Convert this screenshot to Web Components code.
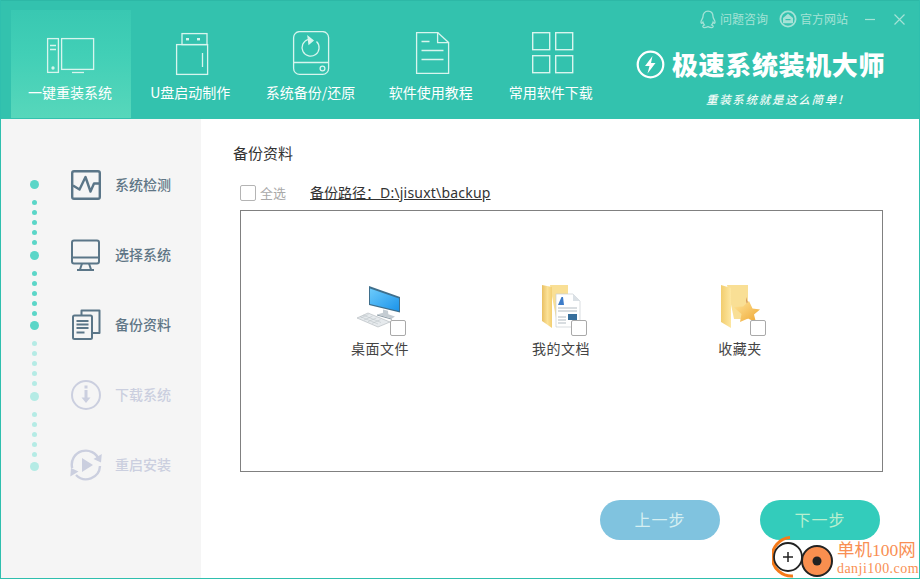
<!DOCTYPE html>
<html lang="zh"><head><meta charset="utf-8"><title>极速系统装机大师</title>
<style>
html,body{margin:0;padding:0;background:#fff;overflow:hidden}
body{font-family:"Noto Sans CJK SC","Noto Sans",sans-serif;width:920px;height:579px}
</style></head><body>
<app-window>
  <top-header slot="header">
    <nav-tab active label="一键重装系统"><svg viewBox="0 0 60 50" width="60" height="50" fill="none" stroke="#d8f5ee" stroke-width="1.3"><rect x="6.600" y="7.600" width="10.800" height="33.800"/><path d="M9 14.500h6M9 18.500h6"/><circle cx="12" cy="37" r="1" fill="#d8f5ee"/><rect x="20.600" y="7.600" width="32" height="30.800"/><path d="M31 41.500h12"/></svg></nav-tab>
    <nav-tab label="U盘启动制作"><svg viewBox="0 0 60 50" width="60" height="50" fill="none" stroke="#d8f5ee" stroke-width="1.3"><rect x="21" y="2.600" width="25" height="11"/><rect x="15.600" y="13.600" width="31" height="29.800"/><path d="M41.500 22v14"/><rect x="25" y="7" width="3" height="2.400" fill="#d8f5ee" stroke="none"/><rect x="36" y="7" width="3" height="2.400" fill="#d8f5ee" stroke="none"/></svg></nav-tab>
    <nav-tab label="系统备份/还原"><svg viewBox="0 0 60 50" width="60" height="50" fill="none" stroke="#d8f5ee" stroke-width="1.3"><rect x="12.600" y="0.600" width="35" height="42.800" rx="6"/><path d="M12.600 31.500h35"/><path d="M27 8.500a8.500 8.500 0 1 0 8.500 2"/><path d="M27 5.500l5 4-4 3.500z" fill="#d8f5ee"/><circle cx="41.500" cy="37.500" r="2.400"/></svg></nav-tab>
    <nav-tab label="软件使用教程"><svg viewBox="0 0 60 50" width="60" height="50" fill="none" stroke="#d8f5ee" stroke-width="1.3"><path d="M14.600 1.600h21v10h11v30.800h-32z"/><path d="M35.600 1.600l11 10"/><path d="M19.500 10.500h8M19.500 19.500h22M19.500 28.500h22"/></svg></nav-tab>
    <nav-tab label="常用软件下载"><svg viewBox="0 0 60 50" width="60" height="50" fill="none" stroke="#d8f5ee" stroke-width="1.4"><rect x="10.700" y="1.700" width="17" height="17"/><rect x="33.700" y="1.700" width="17" height="17"/><rect x="10.700" y="24.700" width="17" height="17"/><rect x="33.700" y="24.700" width="17" height="17"/></svg></nav-tab>
    <brand-panel></brand-panel>
  </top-header>
  <step-side slot="side"></step-side>
  <backup-main slot="main"></backup-main>
  <corner-mark slot="mark"></corner-mark>
</app-window>

<script>
function def(name, css, html){
  customElements.define(name, class extends HTMLElement{
    connectedCallback(){
      if(this.shadowRoot) return;
      const s=this.attachShadow({mode:'open'});
      s.innerHTML='<style>'+css+'</style>'+(typeof html==='function'?html(this):html);
    }
  });
}
def('app-window',`
:host{display:block;position:relative;width:920px;height:579px;box-sizing:border-box;border:1px solid #2fbfae;border-top:0;overflow:hidden;background:#fff}
.body{display:flex;height:460px}
`,`<slot name="header"></slot><div class="body"><slot name="side"></slot><slot name="main"></slot></div><slot name="mark"></slot>`);

def('top-header',`
:host{display:flex;height:119px;box-sizing:border-box;margin:0 -1px;padding:10px 0 1px 11px;background:#33c2ae;border-top:1px solid #2db8a6}
`,`<slot></slot>`);

def('nav-tab',`
:host{display:flex;flex-direction:column;align-items:center;width:120.200px;height:108px;margin-top:-1px;box-sizing:border-box;padding-top:22px;color:#fff;font-size:14px;line-height:20px}
:host([active]){background:linear-gradient(180deg,#39c8b2 0%,#41cfb6 40%,#57d7bb 100%)}
.i{height:44px;display:flex;align-items:flex-start}
::slotted(svg){display:block;margin-top:-1px}
.t{margin:6px 2px 0 0;white-space:nowrap}
`,h=>`<div class="i"><slot></slot></div><div class="t">${h.getAttribute('label')}</div>`);

def('brand-panel',`
:host{flex:1;display:flex;flex-direction:column;margin-top:-10px;min-width:0}
.tools{display:flex;align-items:center;height:36px;padding-left:87px;color:#a5e2d6;font-size:12px;line-height:16px}
.tools svg{display:block;flex:none}
.tools span{margin-left:3px;margin-right:11px;white-space:nowrap}
.tools .min{margin-left:6px}.tools .x{margin-left:19px}
.logo{display:flex;align-items:center;height:30px;margin:12px 0 0 24px}
.logo b{margin-left:7px;font-size:26px;font-weight:900;letter-spacing:.65px;color:#fff;white-space:nowrap;line-height:30px}
.tag{margin:12px 0 0 94px;font-size:11.500px;font-weight:500;font-style:italic;letter-spacing:1.700px;color:#f0fbf7;white-space:nowrap;line-height:16px}
`,`<div class="tools">
<svg width="18" height="19" viewBox="0 0 18 19" fill="none" stroke="#a5e2d6" stroke-width="1.300"><path d="M9 1.200c3.400 0 5 2.600 5 5.400 0 1 .3 1.600 1 2.800.9 1.500 1.200 3.300.5 3.800-.5.3-1-.4-1.400-1-.3 1.300-.9 2.100-1.500 2.700 1 .4 1.800 1 1.500 1.800-.4.900-3 .800-5.100-.1-2.100.9-4.700 1-5.100.1-.3-.8.5-1.400 1.500-1.800-.6-.6-1.200-1.400-1.500-2.700-.4.600-.9 1.300-1.400 1-.7-.5-.4-2.300.5-3.800.7-1.200 1-1.800 1-2.800C4 3.800 5.600 1.200 9 1.200z"/></svg><span>问题咨询</span>
<svg width="18" height="18" viewBox="0 0 18 18"><circle cx="9" cy="9" r="7.600" fill="none" stroke="#a5e2d6" stroke-width="1.800"/><path d="M9 3.800 14 8v5.300H4V8z" fill="#a5e2d6"/><rect x="6.500" y="9" width="5" height="1.200" fill="#33c2ae"/></svg><span>官方网站</span>
<svg class="min" width="10" height="10" viewBox="0 0 10 10" stroke="#a5e2d6" stroke-width="1.200"><path d="M0 5.500h10"/></svg>
<svg class="x" width="11" height="11" viewBox="0 0 11 11" stroke="#a5e2d6" stroke-width="1.200"><path d="M.5.500l10 10M10.500.500l-10 10"/></svg>
</div>
<div class="logo"><svg width="29" height="29" viewBox="0 0 29 29"><circle cx="14.500" cy="14.500" r="12.800" fill="none" stroke="#fff" stroke-width="2.200"/><path d="M16.500 6 9 16h4.500l-2 7.500L19.500 13H15z" fill="#fff"/></svg><b>极速系统装机大师</b></div>
<div class="tag">重装系统就是这么简单!</div>`);

def('step-side',`
:host{display:flex;width:200px;flex:none;box-sizing:border-box;background:#f5f5f5;padding:30.500px 0 0 28.500px}
.rail{width:9px;padding-top:30.500px;display:flex;flex-direction:column;align-items:center;flex:none}
.big{width:9px;height:9px;border-radius:50%;background:#5bd6c8;flex:none}
.big.off,.s.off{background:#b5ebe5}
.g{display:flex;flex-direction:column;gap:5px;margin:11px 0 5.500px}
.s{width:5px;height:5px;border-radius:50%;background:#5bd6c8}
.steps{margin-left:31.500px}
`,()=>{
  const g=o=>`<div class="g">${`<div class="s${o?' off':''}"></div>`.repeat(5)}</div>`;
  return `<div class="rail"><div class="big"></div>${g(0)}<div class="big"></div>${g(0)}<div class="big"></div>${g(1)}<div class="big off"></div>${g(1)}<div class="big off"></div></div>
<div class="steps">
<side-step label="系统检测"><svg viewBox="0 0 32 32" width="32" height="32" fill="none" stroke="#5b7688" stroke-width="2.400" stroke-linejoin="round"><rect x="2.200" y="2.200" width="27.600" height="27.600" rx="1.800"/><path d="M3 16.500l6.500 4 6-12.500 5 14.500 3.500-8H30"/></svg></side-step>
<side-step label="选择系统"><svg viewBox="0 0 32 32" width="32" height="32" fill="none" stroke="#5b7688" stroke-width="2" stroke-linejoin="round"><rect x="2" y="1.500" width="27" height="23" rx="2"/><path d="M2 18.500h27"/><path d="M12 24.500l-2 6M19 24.500l2 6M7 31h17"/></svg></side-step>
<side-step label="备份资料"><svg viewBox="0 0 32 32" width="32" height="32" fill="none" stroke="#5b7688" stroke-width="2" stroke-linejoin="round"><path d="M11.500 6.500V1.500H29.500V24h-7"/><rect x="3" y="6.500" width="19" height="23.500" rx="1.500"/><path d="M6.500 12h12M6.500 15.500h12M6.500 19h12" stroke-width="1.800"/><path d="M6.500 23.500h8"/></svg></side-step>
<side-step off label="下载系统"><svg viewBox="0 0 32 32" width="32" height="32" fill="none" stroke="#cbcfdf" stroke-width="2"><circle cx="16" cy="16" r="14"/><rect x="14.500" y="6.500" width="3" height="3" fill="#cbcfdf" stroke="none"/><path d="M14.500 11h3v7.500h3L16 24l-4.500-5.500h3z" fill="#cbcfdf" stroke="none"/></svg></side-step>
<side-step off label="重启安装"><svg viewBox="0 0 32 32" width="32" height="32" fill="none" stroke="#cbcfdf" stroke-width="2.400"><path d="M29 11A14 14 0 0 0 2.200 19"/><path d="M6 26A14 14 0 0 0 30 17"/><path d="M31.800 5l-.8 8.500-7.500-3.500zM.3 27.500l.7-8.500 7.500 3.500z" fill="#cbcfdf" stroke="none"/><path d="M12 9l11 7-11 7z" fill="#cbcfdf" stroke="none"/></svg></side-step>
</div>`;});

def('side-step',`
:host{display:flex;align-items:center;height:70px;color:#5f7686;font-size:14px;font-weight:500}
:host([off]){color:#cbcfdf}
.t{margin:-2px 0 0 13px;white-space:nowrap}
::slotted(svg){display:block}
`,h=>`<slot></slot><div class="t">${h.getAttribute('label')}</div>`);

def('check-box',`
:host{display:block;width:16px;height:16px;box-sizing:border-box;border:1px solid #b4b4b4;border-radius:2px;background:#fff}
`,``);

def('backup-main',`
:host{display:block;flex:1;box-sizing:border-box;padding:23px 0 0 32px;color:#333;min-width:0}
h2{margin:0;font-size:15px;font-weight:400;line-height:22px;color:#333}
.row{display:flex;align-items:center;height:20px;margin:18px 0 0 7px}
.row check-box{margin-top:2px}
.all{margin-left:4px;font-size:13px;color:#a9a9a9;white-space:nowrap}
.path{margin-left:24px;font-size:14px;color:#333;text-decoration:underline;white-space:nowrap;font-family:"Noto Sans","Noto Sans CJK SC",sans-serif}
.path i{font-style:normal;letter-spacing:.2px}
.box{box-sizing:border-box;width:643px;height:262px;margin:8px 0 0 7px;border:1px solid #808080;display:flex;padding:74px 0 0 99px;gap:100px}
.btns{display:flex;gap:40px;margin:28px 0 0 367px}
`,`<h2>备份资料</h2>
<div class="row"><check-box></check-box><span class="all">全选</span><span class="path">备份路径：<i>D:\\jisuxt\\backup</i></span></div>
<div class="box">
<file-tile label="桌面文件"><svg width="60" height="52" viewBox="0 0 60 52"><defs><linearGradient id="a" x1="0" y1="0" x2="1" y2="1"><stop offset="0" stop-color="#6ccbfb"/><stop offset="1" stop-color="#1b93ea"/></linearGradient></defs><path d="M19 1 50 12v15.500L19 20z" fill="#3f6f8c"/><path d="M20 3.500 49 13.500v12.500L20 19z" fill="url(#a)"/><path d="M33 24.500l5 1.200.3 3.500 6.700 2.300-3 2-15-4 6-1.800z" fill="#c4ccd2"/><path d="M27 29.500l15 4.200v1L27 30.500z" fill="#8b9aa4"/><path d="M7 33l11-5 22 9-12 5z" fill="#e6eaed" stroke="#aeb6bb" stroke-width=".6"/><path d="M10.500 33l8-3.500M14 35l8.500-3.800M18 36.700l8.500-3.800M22 38.400l8.500-3.800M13 30l18 7.500M10 31.500l18 7.500" stroke="#b8c0c5" stroke-width=".5"/></svg></file-tile>
<file-tile label="我的文档" style="margin:0 -1px 0 1px"><svg width="60" height="52" viewBox="0 0 60 52"><defs><linearGradient id="f" x1="0" y1="0" x2="1" y2="0"><stop offset="0" stop-color="#e9c063"/><stop offset=".55" stop-color="#fbe197"/><stop offset="1" stop-color="#f3cf72"/></linearGradient></defs><path d="M19 0H37V33H25z" fill="#f9df95"/><path d="M11 0l10 2v41l-10-7z" fill="url(#f)"/><path d="M25 9h17l7 7v26H25z" fill="#fff" stroke="#c9ced3" stroke-width=".7"/><path d="M42 9v7h7z" fill="#dbe1e6"/><path d="M27 20l3.500-8h1.500l1 8z" fill="#3d7cc9"/><path d="M27 23h19M27 26h19M27 32h8M27 35h8M27 38h8" stroke="#9fa9b2" stroke-width=".8"/><rect x="37" y="29" width="9" height="6" fill="#376f9c"/></svg></file-tile>
<file-tile label="收藏夹"><svg width="60" height="52" viewBox="0 0 60 52"><defs><linearGradient id="g" x1="0" y1="0" x2="1" y2="0"><stop offset="0" stop-color="#f2cd6e"/><stop offset="1" stop-color="#fde7a2"/></linearGradient><linearGradient id="h" x1="0" y1="0" x2="1" y2="1"><stop offset="0" stop-color="#ffe69b"/><stop offset="1" stop-color="#eea531"/></linearGradient></defs><path d="M17 0H38V34H24z" fill="#f9df95"/><path d="M11 0l10 3v40l-10-6z" fill="url(#g)"/><path d="M36 12l4.500 15-2.500.5z" fill="#b55f36"/><path d="M39 16l3.500 7.500 7.500 1-6 5 2 8-8-4-8 3.500 1.500-8-8-7 9.500-.5z" fill="url(#h)"/></svg></file-tile>
</div>
<div class="btns"><pill-btn style="--bg:#80c3df;--fg:#d5eff2">上一步</pill-btn><pill-btn style="--bg:#33ccbb;--fg:#b8efcf">下一步</pill-btn></div>`);

def('file-tile',`
:host{display:block;width:80px;position:relative;text-align:center;font-size:14px;letter-spacing:.5px;line-height:18px;color:#444}
.i{display:flex;justify-content:center;height:52px}
::slotted(svg){display:block}
check-box{position:absolute;left:50px;top:35px;border-color:#a9a9a9}
.t{margin-top:2px;white-space:nowrap}
`,h=>`<div class="i"><slot></slot></div><check-box></check-box><div class="t">${h.getAttribute('label')}</div>`);

def('pill-btn',`
:host{display:flex;align-items:center;justify-content:center;width:120px;height:40px;border-radius:20px;background:var(--bg);color:var(--fg);font-size:16px;letter-spacing:1px;box-sizing:border-box;padding-bottom:3px}
`,`<slot></slot>`);

def('corner-mark',`
:host{position:absolute;right:0;bottom:0;width:147px;height:42px;display:flex;background:transparent}
svg{display:block;flex:none}
.t{margin-left:1px;color:#f98f53;white-space:nowrap}
.a{font-size:17.500px;line-height:20px;margin-top:3px;font-family:"Noto Sans CJK SC",sans-serif}
.a i{font-style:normal;font-family:"Liberation Serif",serif}
.b{font-family:"Liberation Serif",serif;font-size:14px;line-height:16px;letter-spacing:.45px;margin-top:1px}
`,`<svg width="64" height="42" viewBox="0 0 64 42"><path d="M18 1.500A15.500 15.500 0 0 0 21 40" fill="none" stroke="#f57a19" stroke-width="3"/><circle cx="16" cy="21" r="14" fill="#fff" stroke="#222" stroke-width="1.800"/><path d="M16 16v10M11 21h10" stroke="#222" stroke-width="1.500"/><circle cx="45" cy="25" r="15" fill="#f98f4f" stroke="#222" stroke-width="2"/><circle cx="45" cy="25" r="4.500" fill="#222"/></svg>
<div class="t"><div class="a">单机<i>100</i>网</div><div class="b">danji100.com</div></div>`);
</script>
</body></html>
